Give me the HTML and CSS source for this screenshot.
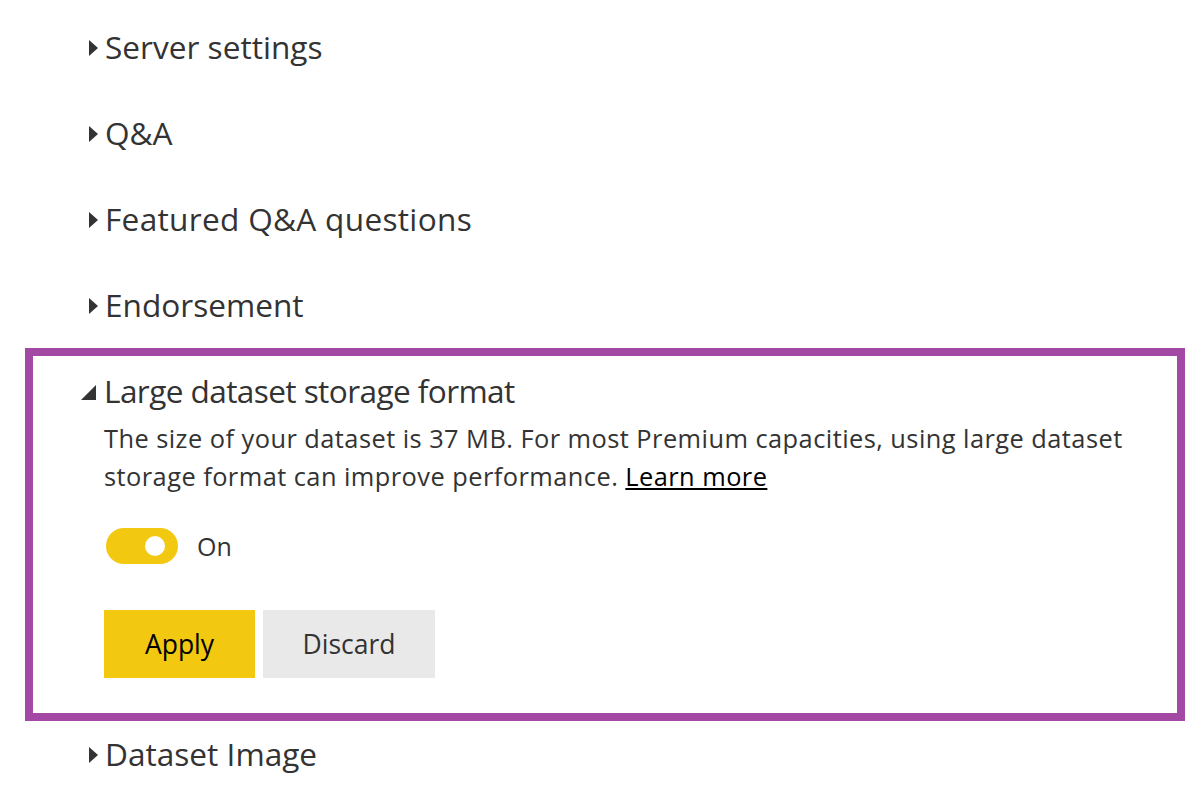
FILE: index.html
```html
<!DOCTYPE html>
<html>
<head>
<meta charset="utf-8">
<link rel="stylesheet" href="styles.css">
</head>
<body>
<div class="page">
  <div class="row">
    <span class="caret-right"></span><span class="title">Server settings</span>
  </div>
  <div class="row">
    <span class="caret-right"></span><span class="title">Q&amp;A</span>
  </div>
  <div class="row">
    <span class="caret-right"></span><span class="title title-wide">Featured Q&amp;A questions</span>
  </div>
  <div class="row">
    <span class="caret-right"></span><span class="title">Endorsement</span>
  </div>
  <div class="box">
    <div class="box-head">
      <span class="caret-down"></span><span class="title title-tight">Large dataset storage format</span>
    </div>
    <div class="box-body">
      <p class="desc">The size of your dataset is 37 MB. For most Premium capacities, using large dataset storage format can improve performance. <a class="link" href="#">Learn more</a></p>
      <div class="toggle-row">
        <span class="toggle"><span class="knob"></span></span>
        <span class="toggle-label">On</span>
      </div>
      <div class="buttons">
        <button class="btn btn-apply">Apply</button>
        <button class="btn btn-discard">Discard</button>
      </div>
    </div>
  </div>
  <div class="row row-last">
    <span class="caret-right"></span><span class="title">Dataset Image</span>
  </div>
</div>
</body>
</html>
```
FILE: styles.css
```css
html, body {
  margin: 0;
  padding: 0;
  background: #ffffff;
}
body {
  font-family: "Open Sans", "Noto Sans", sans-serif;
  color: #333333;
}
.page {
  margin-left: 25px;
  width: 1160px;
  padding-top: 4px;
}
.row {
  height: 86px;
  display: flex;
  align-items: center;
  padding-left: 64px;
}
.row-last {
  height: 66px;
}
.title {
  font-size: 31.6px;
  line-height: 40px;
  color: #333333;
}
.title-wide {
  letter-spacing: 0.3px;
}
.title-tight {
  letter-spacing: -0.6px;
}
.caret-right {
  width: 0;
  height: 0;
  border-top: 8px solid transparent;
  border-bottom: 8px solid transparent;
  border-left: 9px solid #333333;
  margin-right: 7px;
  margin-top: 1px;
}
.caret-down {
  width: 0;
  height: 0;
  border-left: 15px solid transparent;
  border-bottom: 15px solid #333333;
  margin-right: 8px;
  margin-top: 2px;
}
.box {
  border: 8px solid #a349a4;
  padding: 15px 0 35px 0;
}
.box-head {
  display: flex;
  align-items: center;
  padding-left: 48px;
  height: 40px;
}
.box-body {
  padding-left: 71px;
  padding-right: 30px;
}
.desc {
  margin: 8px 0 0 0;
  font-size: 25.4px;
  letter-spacing: 0.45px;
  line-height: 38px;
  color: #333333;
}
.link {
  color: #000000;
  text-decoration: underline;
}
.toggle-row {
  display: flex;
  align-items: center;
  margin-top: 33px;
  padding-left: 2px;
}
.toggle {
  width: 72px;
  height: 36px;
  border-radius: 18px;
  background: #f2c811;
  display: flex;
  align-items: center;
  justify-content: flex-end;
  box-sizing: border-box;
  padding-right: 13px;
}
.knob {
  width: 20px;
  height: 20px;
  border-radius: 50%;
  background: #ffffff;
}
.toggle-label {
  margin-left: 19px;
  font-size: 25px;
  color: #333333;
}
.buttons {
  display: flex;
  gap: 8px;
  margin-top: 46px;
}
.btn {
  font-family: "Open Sans", "Noto Sans", sans-serif;
  font-size: 26.5px;
  height: 68px;
  border: none;
  padding: 0;
  cursor: pointer;
}
.btn-apply {
  width: 151px;
  background: #f2c811;
  color: #000000;
}
.btn-discard {
  width: 172px;
  background: #e9e9e9;
  color: #333333;
}
```
